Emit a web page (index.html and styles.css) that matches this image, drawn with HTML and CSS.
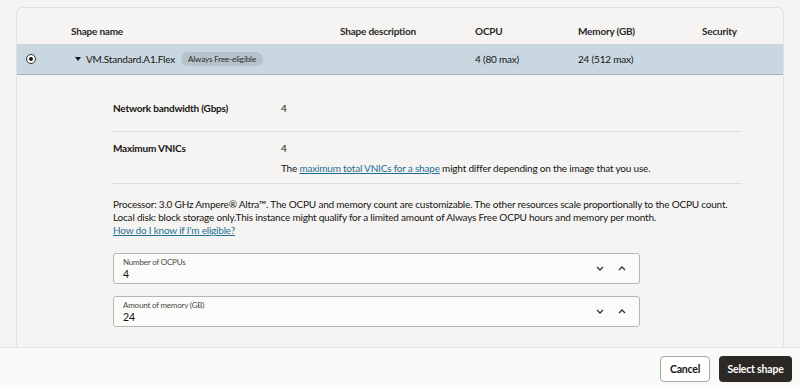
FILE: index.html
```html
<!DOCTYPE html>
<html lang="en">
<head>
  <meta charset="UTF-8" />
  <title>Browse all shapes</title>
  <link rel="stylesheet" href="styles.css">
</head>
<body>
  <div class="page">
    <div class="content">
      <div class="card">
        <!-- Table header -->
        <div class="table-row table-head">
          <div class="cell"></div>
          <div class="cell">Shape name</div>
          <div class="cell">Shape description</div>
          <div class="cell">OCPU</div>
          <div class="cell">Memory (GB)</div>
          <div class="cell">Security</div>
        </div>

        <!-- Selected shape -->
        <div class="table-row table-selected">
          <div class="cell cell-radio"><span class="radio"></span></div>
          <div class="cell cell-name">
            <span class="caret"></span>
            <span class="shape-name">VM.Standard.A1.Flex</span>
            <span class="badge">Always Free-eligible</span>
          </div>
          <div class="cell"></div>
          <div class="cell">4 (80 max)</div>
          <div class="cell">24 (512 max)</div>
          <div class="cell"></div>
        </div>

        <!-- Expanded details -->
        <div class="details">
          <div class="detail-row detail-first">
            <div class="detail-label">Network bandwidth (Gbps)</div>
            <div class="detail-value">4</div>
          </div>
          <div class="detail-row detail-second">
            <div class="detail-label">Maximum VNICs</div>
            <div class="detail-value">
              <div>4</div>
              <div class="detail-note">The <a href="#">maximum total VNICs for a shape</a> might differ depending on the image that you use.</div>
            </div>
          </div>

          <p class="processor">
            Processor: 3.0 GHz Ampere® Altra™. The OCPU and memory count are customizable. The other resources scale proportionally to the OCPU count.<br>
            Local disk: block storage only.This instance might qualify for a limited amount of Always Free OCPU hours and memory per month.<br>
            <a href="#">How do I know if I'm eligible?</a>
          </p>

          <div class="fields">
            <div class="field">
              <div class="field-text">
                <div class="field-label">Number of OCPUs</div>
                <div class="field-value">4</div>
              </div>
              <div class="steppers">
                <svg width="8" height="5" viewBox="0 0 8 5"><path d="M1 1l3 3 3-3" fill="none" stroke="#333" stroke-width="1.3"/></svg>
                <svg width="8" height="5" viewBox="0 0 8 5"><path d="M1 4l3-3 3 3" fill="none" stroke="#333" stroke-width="1.3"/></svg>
              </div>
            </div>
            <div class="field">
              <div class="field-text">
                <div class="field-label">Amount of memory (GB)</div>
                <div class="field-value">24</div>
              </div>
              <div class="steppers">
                <svg width="8" height="5" viewBox="0 0 8 5"><path d="M1 1l3 3 3-3" fill="none" stroke="#333" stroke-width="1.3"/></svg>
                <svg width="8" height="5" viewBox="0 0 8 5"><path d="M1 4l3-3 3 3" fill="none" stroke="#333" stroke-width="1.3"/></svg>
              </div>
            </div>
          </div>
        </div>
      </div>
    </div>

    <!-- Footer -->
    <div class="footer">
      <button class="btn btn-cancel">Cancel</button>
      <button class="btn btn-primary">Select shape</button>
    </div>
  </div>
</body>
</html>
```

FILE: styles.css
```css
* {
  margin: 0;
  padding: 0;
  box-sizing: border-box;
}

html, body {
  width: 800px;
  height: 387px;
  overflow: hidden;
  background: #f5f4f2;
  color: #161513;
  font-family: Lato, 'Liberation Sans', sans-serif;
  font-size: 10px;
  letter-spacing: -0.2px;
}

a {
  color: #1f6f94;
  text-decoration: underline;
}

.page {
  display: flex;
  flex-direction: column;
  height: 387px;
}

.content {
  flex: 1;
  min-height: 0;
  padding: 7px 16px 0 16px;
  overflow: hidden;
}

.card {
  height: 100%;
  border: 1px solid #e2e0dd;
  border-bottom: none;
  border-radius: 6px 6px 0 0;
  overflow: hidden;
}

.table-row {
  display: grid;
  grid-template-columns: 54px 269px 135px 103px 124px 1fr;
  align-items: center;
}

.table-head {
  height: 36px;
  padding-top: 10px;
  font-weight: 700;
  color: #2b2927;
}

.table-selected {
  height: 31px;
  background: #c9d7e1;
  border-bottom: 1px solid #a8b3bb;
}

.cell-radio {
  display: flex;
  padding-left: 9px;
}

.radio {
  width: 10px;
  height: 10px;
  border: 1.5px solid #2b2927;
  border-radius: 50%;
  position: relative;
  background: #fff;
}

.radio::after {
  content: '';
  position: absolute;
  left: 1.5px;
  top: 1.5px;
  width: 4px;
  height: 4px;
  border-radius: 50%;
  background: #161513;
}

.cell-name {
  display: flex;
  align-items: center;
  margin-left: 4px;
}

.caret {
  width: 0;
  height: 0;
  border-left: 3px solid transparent;
  border-right: 3px solid transparent;
  border-top: 4px solid #161513;
  margin-right: 5px;
}

.shape-name {
  margin-right: 6px;
  font-size: 10px;
}

.badge {
  background: #b6c3cc;
  border-radius: 8px;
  padding: 2px 7px;
  font-size: 8px;
  letter-spacing: -0.1px;
  color: #2b2927;
}

.details {
  padding-left: 96px;
}

.detail-row {
  display: flex;
  width: 629px;
  border-bottom: 1px solid #dedcd9;
  line-height: 16px;
}

.detail-first {
  padding: 25px 0 15px;
}

.detail-second {
  padding: 8px 0 7px;
}

.detail-label {
  width: 168px;
  font-weight: 700;
}

.detail-note {
  margin-top: 4px;
}

.processor {
  margin-top: 14px;
  line-height: 13px;
}

.fields {
  display: flex;
  flex-direction: column;
  gap: 12px;
  margin-top: 16px;
  width: 527px;
}

.field {
  display: flex;
  align-items: center;
  height: 31px;
  background: #fbfbfa;
  border: 1px solid #b7b5b2;
  border-radius: 3px;
  padding: 0 13px 0 9px;
}

.field-text {
  flex: 1;
}

.field-label {
  font-size: 8px;
  color: #4a4845;
  line-height: 11px;
}

.field-value {
  font-size: 10.5px;
  line-height: 13px;
}

.steppers {
  display: flex;
  gap: 14px;
  align-items: center;
}

.footer {
  height: 40px;
  background: #f9f9f8;
  border-top: 1px solid #e4e2df;
  display: flex;
  justify-content: flex-end;
  align-items: center;
  gap: 9px;
  padding-right: 8px;
  padding-top: 3px;
}

.btn {
  height: 26px;
  border-radius: 4px;
  font-family: Lato, 'Liberation Sans', sans-serif;
  font-size: 10.5px;
  font-weight: 700;
  letter-spacing: -0.2px;
  cursor: pointer;
}

.btn-cancel {
  width: 50px;
  background: #fff;
  border: 1px solid #a9a7a4;
  color: #161513;
}

.btn-primary {
  width: 73px;
  background: #2b2826;
  border: none;
  color: #fff;
}
```
